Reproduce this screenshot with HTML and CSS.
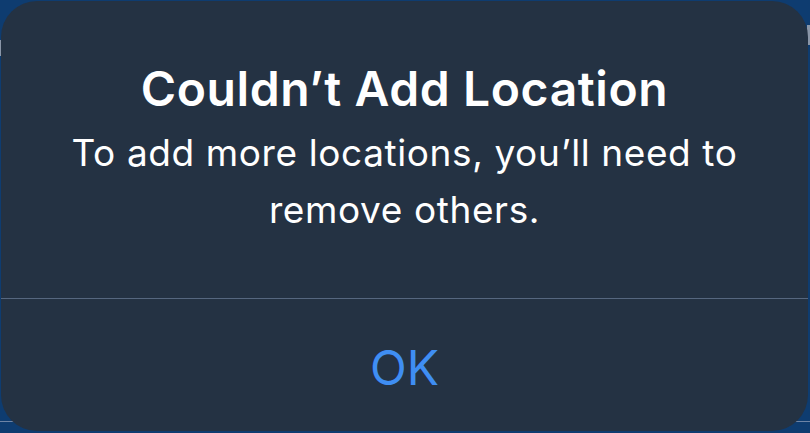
FILE: index.html
```html
<!DOCTYPE html>
<html lang="en">
<head>
<meta charset="utf-8">
<title>Couldn’t Add Location</title>
<link rel="stylesheet" href="styles.css">
</head>
<body>
<div class="scene">
  <div class="alert" role="alertdialog">
    <div class="alert-content">
      <h1 class="alert-title">Couldn’t Add Location</h1>
      <p class="alert-message">To add more locations, you’ll need to<br>remove others.</p>
    </div>
    <div class="alert-separator"></div>
    <div class="alert-actions">
      <button class="alert-button" type="button">OK</button>
    </div>
  </div>
</div>
</body>
</html>
```

FILE: styles.css
```css
html, body {
  margin: 0;
  padding: 0;
}

body {
  width: 810px;
  height: 433px;
  overflow: hidden;
  font-family: Inter, "Noto Sans", "Liberation Sans", sans-serif;
}

.scene {
  box-sizing: border-box;
  width: 810px;
  height: 433px;
  padding: 1px 2px 2px 1px;
  background:
    linear-gradient(to bottom, transparent 421px, #6d84a6 421px, #6d84a6 422px, transparent 422px),
    linear-gradient(to right, #8a96a8 0, #8a96a8 1px, transparent 1px) 0 40px / 810px 16px no-repeat,
    linear-gradient(to left, #8a96a8 0, #8a96a8 3px, transparent 3px) 0 25px / 810px 20px no-repeat,
    #0e3c70;
}

.alert {
  box-sizing: border-box;
  height: 100%;
  border-radius: 36px;
  background: #243243;
  display: flex;
  flex-direction: column;
  overflow: hidden;
}

.alert-content {
  padding: 59px 20px 60px;
  text-align: center;
  color: #ffffff;
}

.alert-title {
  margin: 0;
  font-size: 48px;
  line-height: 58px;
  font-weight: 600;
  letter-spacing: 0.6px;
}

.alert-message {
  margin: 7px 0 0;
  font-size: 37px;
  line-height: 56.5px;
  font-weight: 400;
  letter-spacing: 0.6px;
}

.alert-separator {
  height: 1px;
  background: #56677f;
}

.alert-actions {
  flex: 1;
  display: flex;
  align-items: center;
  justify-content: center;
  padding-top: 6px;
}

.alert-button {
  border: 0;
  padding: 0;
  background: transparent;
  font-family: inherit;
  font-size: 48px;
  line-height: 58px;
  font-weight: 400;
  color: #3f8ef3;
}
```
